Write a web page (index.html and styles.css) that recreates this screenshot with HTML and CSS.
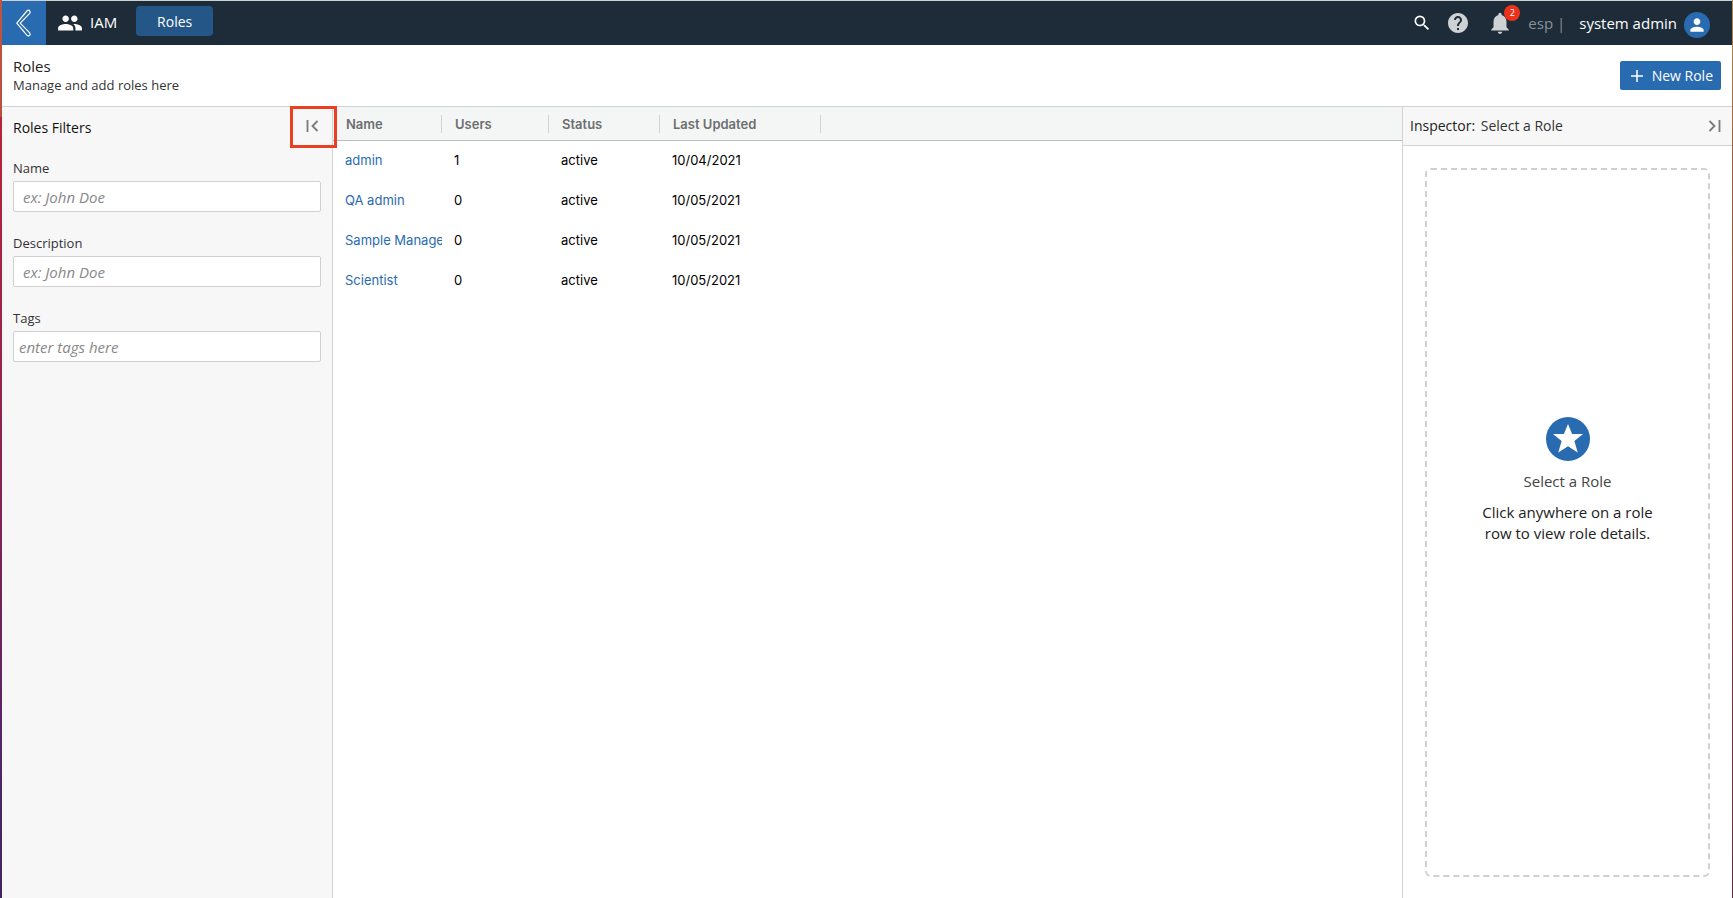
FILE: index.html
```html
<!DOCTYPE html>
<html lang="en">
<head>
<meta charset="utf-8">
<title>Roles</title>
<link rel="stylesheet" href="styles.css">
</head>
<body>
<div class="desktop">
<div class="app">
  <header class="topbar">
    <button class="back" type="button" aria-label="Back">
      <svg width="44" height="44" viewBox="0 0 44 44"><path d="M14.8 22.2 24.9 10q1.500-1.500 2.800-.2 1 1.300 0 2.600L18.200 22.200 27.700 31.800q1 1.300 0 2.600-1.300 1.200-2.700 0Z" fill="none" stroke="#fff" stroke-width="1.200" stroke-linejoin="round"/></svg>
    </button>
    <svg class="people" width="26" height="26" viewBox="0 0 24 24" fill="#fff"><path d="M16 11c1.660 0 2.990-1.340 2.990-3S17.660 5 16 5s-3 1.340-3 3 1.340 3 3 3zm-8 0c1.660 0 2.990-1.340 2.990-3S9.660 5 8 5 5 6.340 5 8s1.340 3 3 3zm0 2c-2.330 0-7 1.170-7 3.500V19h14v-2.500c0-2.330-4.670-3.500-7-3.500zm8 0c-.29 0-.62.020-.97.050 1.160.84 1.970 1.970 1.970 3.450V19h6v-2.500c0-2.330-4.670-3.500-7-3.500z"/></svg>
    <span class="app-name">IAM</span>
    <a class="tab" href="#roles">Roles</a>
    <div class="tools">
      <button class="icon-btn" type="button" aria-label="Search"><svg width="20" height="20" viewBox="0 0 24 24" fill="#fff"><path d="M15.500 14h-.79l-.28-.27A6.470 6.470 0 0 0 16 9.500 6.500 6.500 0 1 0 9.500 16c1.610 0 3.090-.59 4.230-1.570l.27.28v.79l5 4.990L20.490 19l-4.990-5zm-6 0C7.010 14 5 11.990 5 9.500S7.010 5 9.500 5 14 7.010 14 9.500 11.990 14 9.500 14z"/></svg></button>
      <button class="icon-btn help" type="button" aria-label="Help"><svg width="24" height="24" viewBox="0 0 24 24" fill="#ced2d5"><path d="M12 2C6.480 2 2 6.480 2 12s4.480 10 10 10 10-4.480 10-10S17.520 2 12 2zm1 17h-2v-2h2v2zm2.070-7.750-.9.920C13.450 12.900 13 13.500 13 15h-2v-.5c0-1.100.45-2.100 1.170-2.830l1.240-1.260c.37-.36.59-.86.59-1.410 0-1.100-.9-2-2-2s-2 .9-2 2H8c0-2.210 1.790-4 4-4s4 1.790 4 4c0 .88-.36 1.680-.93 2.250z"/></svg></button>
      <button class="icon-btn bell" type="button" aria-label="Notifications"><svg width="26" height="26" viewBox="0 0 24 24" fill="#ced2d5"><path d="M12 22c1.100 0 2-.9 2-2h-4c0 1.100.89 2 2 2zm6-6v-5c0-3.070-1.640-5.640-4.500-6.320V4c0-.83-.67-1.500-1.500-1.500s-1.500.67-1.500 1.500v.68C7.630 5.360 6 7.920 6 11v5l-2 2v1h16v-1l-2-2z"/></svg><span class="badge">2</span></button>
      <span class="tenant">esp |</span>
      <span class="user">system admin</span>
      <button class="avatar" type="button" aria-label="Account"><svg width="20" height="20" viewBox="0 0 24 24" fill="#fff"><path d="M12 12c2.210 0 4-1.790 4-4s-1.790-4-4-4-4 1.790-4 4 1.790 4 4 4zm0 2c-2.670 0-8 1.340-8 4v2h16v-2c0-2.660-5.330-4-8-4z"/></svg></button>
    </div>
  </header>

  <div class="page-head">
    <div>
      <h1>Roles</h1>
      <p>Manage and add roles here</p>
    </div>
    <button class="new-role" type="button"><svg width="12" height="12" viewBox="0 0 12 12"><path d="M6 0v12M0 6h12" stroke="#fff" stroke-width="1.500"/></svg>New Role</button>
  </div>

  <div class="columns">
    <aside class="filters">
      <h2>Roles Filters</h2>
      <button class="collapse" type="button" aria-label="Collapse filters"><svg width="13" height="12" viewBox="0 0 13 12" fill="none" stroke="#77797b" stroke-width="1.800"><path d="M1.500 0v12M11.500 1 6.500 6l5 5"/></svg></button>
      <div class="field"><label for="f-name">Name</label><input id="f-name" type="text" placeholder="ex: John Doe"></div>
      <div class="field"><label for="f-desc">Description</label><input id="f-desc" type="text" placeholder="ex: John Doe"></div>
      <div class="field"><label for="f-tags">Tags</label><input id="f-tags" class="tags" type="text" placeholder="enter tags here"></div>
    </aside>

    <main class="grid">
      <table>
        <colgroup><col class="c-name"><col class="c-users"><col class="c-status"><col class="c-updated"><col></colgroup>
        <thead><tr><th><span>Name</span></th><th><span>Users</span></th><th><span>Status</span></th><th><span>Last Updated</span></th><td></td></tr></thead>
        <tbody>
          <tr><td><a href="#admin">admin</a></td><td>1</td><td>active</td><td>10/04/2021</td><td></td></tr>
          <tr><td><a href="#qa-admin">QA admin</a></td><td>0</td><td>active</td><td>10/05/2021</td><td></td></tr>
          <tr><td><a href="#sample-manager">Sample Manager</a></td><td>0</td><td>active</td><td>10/05/2021</td><td></td></tr>
          <tr><td><a href="#scientist">Scientist</a></td><td>0</td><td>active</td><td>10/05/2021</td><td></td></tr>
        </tbody>
      </table>
    </main>

    <aside class="inspector">
      <div class="inspector-head">
        <h2>Inspector: <span>Select a Role</span></h2>
        <button class="expand" type="button" aria-label="Collapse inspector"><svg width="13" height="12" viewBox="0 0 13 12" fill="none" stroke="#77797b" stroke-width="1.800"><path d="M11.500 0v12M1.500 1l5 5-5 5"/></svg></button>
      </div>
      <div class="empty">
        <svg width="44" height="44" viewBox="0 0 44 44"><circle cx="22" cy="22" r="22" fill="#296bb1"/><path d="M22 7l4.100 10H37l-8.600 7 3.300 11.500L22 29.200l-9.700 6.300L15.600 24 7 17h10.900z" fill="#fff"/></svg>
        <h3>Select a Role</h3>
        <p>Click anywhere on a role row to view role details.</p>
      </div>
    </aside>
  </div>
</div>
</div>
</body>
</html>
```
FILE: styles.css
```css
* { box-sizing: border-box; }

body, h1, h2, h3, p { margin: 0; }

body {
  font-family: "Open Sans", "Noto Sans", sans-serif;
  font-size: 14px;
  color: #222;
}

h1, h2, h3 { font-weight: 400; }

button, input { font: inherit; }

button {
  padding: 0;
  border: 0;
  background: none;
  cursor: pointer;
}

a { text-decoration: none; }

svg { display: block; flex: none; }

.desktop {
  display: flex;
  min-height: 100vh;
  padding: 0 1px 0 2px;
  background:
    linear-gradient(#b98a50, #a8683a 13%, #8f3030 50%, #6d2a45) right / 1px 100% no-repeat,
    linear-gradient(#c25442, #b8503f 13%, #b9243a 13%, #8c2350 50%, #4d2568 88%, #402560) left / 2px 100% no-repeat;
}

.app {
  flex: 1;
  min-width: 0;
  display: flex;
  flex-direction: column;
  background: #fff;
  border-top: 1px solid #c9d1d2;
}

.topbar {
  display: flex;
  align-items: center;
  height: 44px;
  background: #1d2c38;
  color: #fff;
}

.back {
  width: 44px;
  height: 44px;
  background: #296bb1;
}

.people { margin-left: 11px; }

.app-name {
  margin-left: 7px;
  padding-bottom: 2px;
  font-size: 15px;
}

.tab {
  align-self: flex-start;
  width: 77px;
  height: 30px;
  margin: 5px 0 0 19px;
  border-radius: 4px;
  background: #255688;
  color: #fff;
  line-height: 32px;
  text-align: center;
}

.tools {
  display: flex;
  align-items: center;
  margin-left: auto;
  padding-right: 22px;
}

.help { margin-left: 14px; }

.bell {
  position: relative;
  margin-left: 17px;
}

.badge {
  position: absolute;
  top: -5px;
  right: -7px;
  width: 16px;
  border-radius: 8px;
  background: #ed321c;
  color: #fff;
  font-size: 9px;
  line-height: 16px;
  text-align: center;
}

.tenant {
  margin-left: 15px;
  color: #8a9197;
  font-size: 15px;
}

.user {
  margin-left: 14px;
  font-size: 15px;
}

.avatar {
  display: flex;
  align-items: center;
  justify-content: center;
  width: 26px;
  height: 26px;
  margin: 3px 0 0 7px;
  border-radius: 50%;
  background: #296bb1;
}

.page-head {
  display: flex;
  align-items: center;
  justify-content: space-between;
  height: 62px;
  padding: 0 11px;
  border-bottom: 1px solid #d0d2d4;
}

.page-head h1 {
  font-size: 15px;
  line-height: 18px;
}

.page-head p {
  padding-top: 1px;
  font-size: 13px;
  line-height: 19px;
  color: #333;
}

.new-role {
  display: flex;
  align-items: center;
  gap: 9px;
  height: 29px;
  padding: 0 8px 0 11px;
  border-radius: 2px;
  background: #296bb1;
  color: #fff;
}

.columns {
  flex: 1;
  display: flex;
}

.filters {
  position: relative;
  width: 331px;
  padding: 10px 11px;
  border-right: 1px solid #d0d2d4;
  background: #f7f7f7;
}

.filters h2 {
  font-size: 14px;
  line-height: 22px;
  color: #111;
}

.collapse {
  position: absolute;
  top: -1px;
  right: -5px;
  display: flex;
  align-items: center;
  justify-content: center;
  width: 47px;
  height: 42px;
  padding: 0 2px 2px 0;
  border: 3px solid #ec3e20;
}

.field {
  display: flex;
  flex-direction: column;
  height: 75px;
}

.filters h2 + .collapse + .field { margin-top: 20px; }

.field label {
  font-size: 13px;
  line-height: 18px;
  color: #333;
}

.field input {
  height: 31px;
  margin-top: 4px;
  padding: 0 9px;
  border: 1px solid #d0d0d0;
  border-radius: 2px;
  background: #fff;
  font-size: 15px;
}

.field .tags { padding: 0 5px; }

.field input::placeholder {
  color: #888;
  font-style: italic;
  opacity: 1;
}

.grid {
  flex: 1;
  min-width: 0;
}

.grid table {
  width: 100%;
  border-collapse: separate;
  border-spacing: 0;
  table-layout: fixed;
  font-family: Inter, Roboto, sans-serif;
  font-size: 13px;
  color: #000;
}

.c-name { width: 109px; }
.c-users { width: 107px; }
.c-status { width: 111px; }
.c-updated { width: 161px; }

.grid th, .grid thead td {
  height: 34px;
  padding: 0;
  border-bottom: 1px solid #b8bec2;
  background: #f4f6f6;
  text-align: left;
}

.grid th span {
  display: block;
  padding-left: 13px;
  border-right: 1px solid #d0d2d4;
  font-weight: 600;
  line-height: 18px;
  color: #6c6f70;
}

.grid tbody td {
  height: 40px;
  padding: 0 0 2px 12px;
  overflow: hidden;
  white-space: nowrap;
}

.grid a { color: #296bb1; }

.inspector {
  display: flex;
  flex-direction: column;
  width: 330px;
  border-left: 1px solid #d0d2d4;
}

.inspector-head {
  display: flex;
  align-items: center;
  justify-content: space-between;
  height: 39px;
  padding: 0 11px 0 7px;
  border-bottom: 1px solid #d0d2d4;
  background: #f7f7f7;
}

.inspector-head h2 {
  padding-bottom: 1px;
  font-size: 14px;
}

.inspector-head span { margin-left: 2px; color: #333; }

.empty {
  flex: 1;
  display: flex;
  flex-direction: column;
  align-items: center;
  justify-content: center;
  margin: 22px 22px 21px;
  padding: 0 48px 84px;
  border: 2px dashed #d0d0d0;
  border-radius: 6px;
  font-size: 15px;
  text-align: center;
}

.empty h3 {
  margin-top: 10px;
  font-size: 15px;
  line-height: 20px;
  color: #444;
}

.empty p {
  margin-top: 11px;
  line-height: 21px;
}
```
